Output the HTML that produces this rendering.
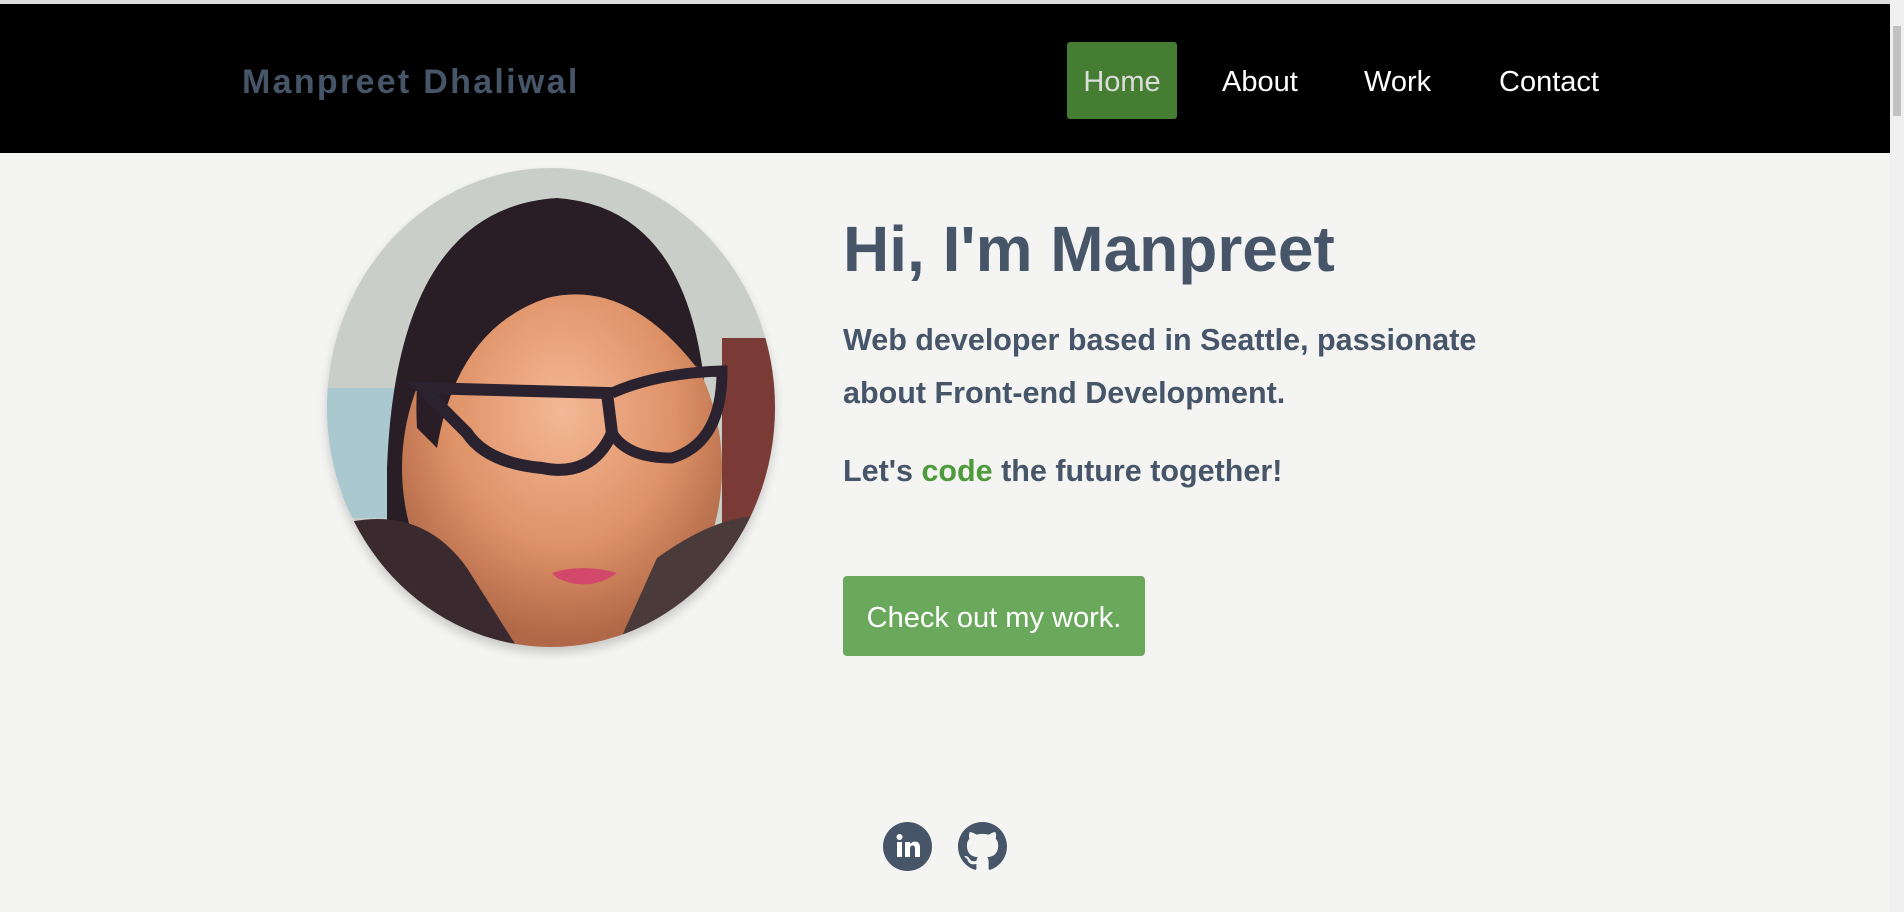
<!DOCTYPE html>
<html><head><meta charset="utf-8"><style>
*{margin:0;padding:0;box-sizing:border-box}
html,body{width:1904px;height:912px;overflow:hidden;background:#f4f4f2;font-family:"Liberation Sans",sans-serif}
.top{position:absolute;left:0;top:0;width:1904px;height:4px;background:#dcdcdc}
.hdr{position:absolute;left:0;top:4px;width:1890px;height:149px;background:#000}
.sb{position:absolute;right:0;top:0;width:14px;height:912px;background:#f0f0f0}
.sb i{position:absolute;left:3px;top:26px;width:8px;height:90px;background:#c1c1c1}
.logo{position:absolute;left:242px;top:63px;font-size:34px;font-weight:bold;color:#475569;letter-spacing:2.3px}
.nav a{position:absolute;top:42px;height:77px;line-height:81px;font-size:29px;color:#fff;text-decoration:none}
.home{left:1067px;width:110px;text-align:center;background:#457d32;border-radius:3px;color:#ddd !important}
.photo{position:absolute;left:327px;top:168px;width:448px;height:479px;border-radius:50%;overflow:hidden;box-shadow:0 6px 10px rgba(0,0,0,.18)}
h1{position:absolute;left:843px;top:212px;font-size:64px;color:#475569;font-weight:bold}
.p{position:absolute;left:843px;font-size:30.5px;font-weight:bold;color:#475569;line-height:53px}
.g{color:#4f9a3c}
.btn{position:absolute;left:843px;top:576px;width:302px;height:80px;line-height:84px;text-align:center;background:#6aa95b;color:#fff;font-size:29px;border-radius:4px}
.ic{position:absolute;top:822px;width:49px;height:49px}
</style></head><body>
<div class="top"></div>
<div class="hdr"></div>
<div class="logo">Manpreet Dhaliwal</div>
<div class="nav"><a class="home">Home</a><a style="left:1222px">About</a><a style="left:1364px">Work</a><a style="left:1499px">Contact</a></div>
<div class="photo"><svg width="448" height="479" viewBox="0 0 448 479">
<defs><radialGradient id="f" cx="0.5" cy="0.35" r="0.6"><stop offset="0" stop-color="#f4b896"/><stop offset="0.6" stop-color="#de9166"/><stop offset="1" stop-color="#b06848"/></radialGradient></defs>
<rect width="448" height="479" fill="#c9cfc8"/>
<rect x="0" y="220" width="80" height="130" fill="#a9c8d0"/>
<rect x="395" y="170" width="53" height="230" fill="#7a3a35"/>
<path d="M60 300 Q70 40 230 30 Q370 40 380 250 L390 400 L60 400Z" fill="#2a1e26"/>
<ellipse cx="235" cy="300" rx="160" ry="190" fill="url(#f)"/>
<path d="M90 260 Q80 90 230 60 Q350 70 370 200 Q300 110 220 130 Q130 160 110 280Z" fill="#2a1e26"/>
<path d="M0 360 Q90 330 140 400 L190 479 L0 479Z" fill="#3a2a30"/>
<path d="M330 390 Q400 340 448 350 L448 479 L290 479Z" fill="#4a3a3a"/>
<path d="M95 220 L280 225 L285 265 Q265 310 215 300 Q160 295 140 265 L115 240Z" fill="none" stroke="#2b2230" stroke-width="12"/>
<path d="M285 225 Q330 205 395 203 Q395 275 345 290 Q300 290 285 265" fill="none" stroke="#2b2230" stroke-width="11"/>
<path d="M225 405 Q255 395 290 405 Q262 425 230 410Z" fill="#d2486a"/>
</svg></div>
<h1>Hi, I'm Manpreet</h1>
<div class="p" style="top:314px">Web developer based in Seattle, passionate<br>about Front-end Development.</div>
<div class="p" style="top:445px">Let's <span class="g">code</span> the future together!</div>
<div class="btn">Check out my work.</div>
<svg class="ic" style="left:883px" viewBox="0 0 49 49"><circle cx="24.5" cy="24.5" r="24.5" fill="#475569"/><rect x="14" y="20" width="5" height="15" fill="#fff"/><circle cx="16.5" cy="15" r="3" fill="#fff"/><path d="M22 20h5v2.2c1-1.6 2.7-2.6 5-2.6 3.6 0 5 2.3 5 6V35h-5v-8.5c0-2-.7-3-2.3-3-1.8 0-2.7 1.2-2.7 3.2V35h-5z" fill="#fff"/></svg>
<svg class="ic" style="left:958px" viewBox="0 0 16 16"><path fill="#475569" d="M8 0C3.58 0 0 3.58 0 8c0 3.54 2.290 6.53 5.47 7.59.4.07.55-.17.55-.38 0-.19-.01-.82-.01-1.49-2.01.37-2.530-.49-2.69-.94-.09-.23-.48-.94-.82-1.13-.28-.15-.68-.52-.01-.53.63-.01 1.08.58 1.23.82.72 1.21 1.87.87 2.33.66.07-.52.28-.87.51-1.07-1.78-.2-3.64-.89-3.640-3.95 0-.87.31-1.59.82-2.15-.08-.2-.36-1.02.08-2.12 0 0 .67-.21 2.2.82.64-.18 1.32-.27 2-.27.68 0 1.36.09 2 .27 1.53-1.04 2.2-.82 2.2-.82.44 1.1.16 1.92.08 2.12.51.56.82 1.27.82 2.15 0 3.07-1.87 3.75-3.65 3.95.29.25.54.73.54 1.48 0 1.07-.01 1.93-.01 2.2 0 .21.15.46.55.38A8.013 8.013 0 0016 8c0-4.42-3.58-8-8-8z"/></svg>
<div class="sb"><i></i></div>
</body></html>
